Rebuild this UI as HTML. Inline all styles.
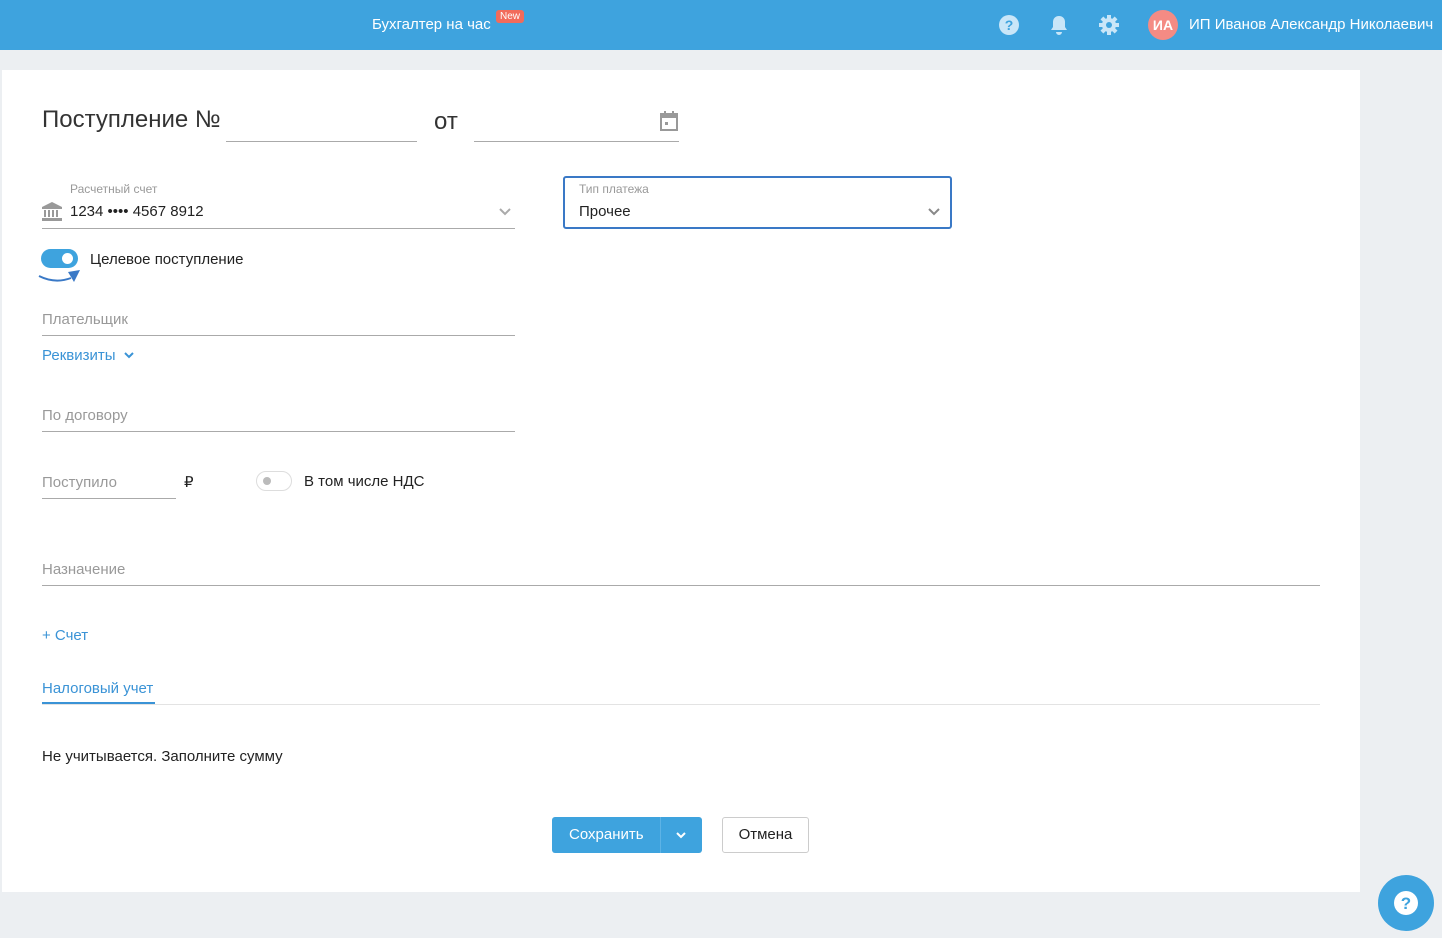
<!DOCTYPE html>
<html><head><meta charset="utf-8"><style>
*{margin:0;padding:0;box-sizing:border-box}
body{width:1442px;height:938px;background:#eceff2;font-family:"Liberation Sans",sans-serif;position:relative;overflow:hidden;color:#222}
.a{position:absolute}
.hdr{left:0;top:0;width:1442px;height:50px;background:#3ea3de}
.card{left:2px;top:70px;width:1358px;height:822px;background:#fff}
.line{height:1px;background:#aaa}
.ph{color:#999;font-size:15px}
.lbl{color:#999;font-size:12px}
.blue{color:#3a93d6}
</style></head><body>
<div class="a hdr"></div>
<div class="a" style="left:372px;top:16px;color:#fff;font-size:15px">Бухгалтер на час</div>
<div class="a" style="left:496px;top:10px;background:#f26b5b;color:#fff;font-size:10px;padding:1px 4px;border-radius:3px">New</div>
<svg class="a" style="left:998px;top:14px" width="22" height="22" viewBox="0 0 22 22"><circle cx="11" cy="11" r="10" fill="#c9e6f8"/><text x="11" y="16" font-size="14" font-weight="bold" fill="#3ea3de" text-anchor="middle" font-family="Liberation Sans">?</text></svg>
<svg class="a" style="left:1050px;top:14px" width="18" height="22" viewBox="0 0 18 22"><path d="M9 2c-4 0-6 3-6 6v5l-2 3h16l-2-3V8c0-3-2-6-6-6z M6 18a3 3 0 0 0 6 0z" fill="#c9e6f8"/></svg>
<svg class="a" style="left:1098px;top:14px" width="22" height="22" viewBox="0 0 22 22"><g fill="#c9e6f8"><circle cx="11" cy="11" r="7"/><rect x="9" y="1" width="4" height="20"/><rect x="1" y="9" width="20" height="4"/><rect x="9" y="1" width="4" height="20" transform="rotate(45 11 11)"/><rect x="9" y="1" width="4" height="20" transform="rotate(-45 11 11)"/></g><circle cx="11" cy="11" r="3" fill="#3ea3de"/></svg>
<div class="a" style="left:1148px;top:10px;width:30px;height:30px;border-radius:50%;background:#f48b84;color:#fff;font-weight:bold;font-size:14px;text-align:center;line-height:30px">ИА</div>
<div class="a" style="left:1189px;top:16px;color:#fff;font-size:15px">ИП Иванов Александр Николаевич</div>

<div class="a card"></div>
<div class="a" style="left:42px;top:106px;font-size:24px;color:#333">Поступление №</div>
<div class="a line" style="left:226px;top:141px;width:191px"></div>
<div class="a" style="left:434px;top:108px;font-size:24px;color:#333">от</div>
<div class="a line" style="left:474px;top:141px;width:205px"></div>
<svg class="a" style="left:660px;top:111px" width="18" height="20" viewBox="0 0 18 20"><rect x="1" y="3" width="16" height="16" fill="none" stroke="#999" stroke-width="2"/><rect x="1" y="3" width="16" height="4" fill="#999"/><rect x="4" y="0" width="2" height="4" fill="#999"/><rect x="12" y="0" width="2" height="4" fill="#999"/><rect x="5" y="11" width="3" height="3" fill="#999"/></svg>

<div class="a lbl" style="left:70px;top:182px">Расчетный счет</div>
<svg class="a" style="left:42px;top:202px" width="20" height="19" viewBox="0 0 20 19"><path d="M10 0L0 5h20z" fill="#999"/><rect x="0" y="5" width="20" height="2" fill="#999"/><rect x="2" y="8" width="2" height="7" fill="#999"/><rect x="6" y="8" width="2" height="7" fill="#999"/><rect x="10" y="8" width="2" height="7" fill="#999"/><rect x="14" y="8" width="2" height="7" fill="#999"/><rect x="0" y="16" width="20" height="3" fill="#999"/></svg>
<div class="a" style="left:70px;top:203px;font-size:15px">1234 •••• 4567 8912</div>
<svg class="a" style="left:499px;top:208px" width="12" height="8" viewBox="0 0 12 8"><path d="M1 1l5 5 5-5" fill="none" stroke="#aaa" stroke-width="2"/></svg>
<div class="a line" style="left:42px;top:228px;width:473px"></div>

<div class="a" style="left:563px;top:176px;width:389px;height:53px;border:2px solid #3a79c6;border-radius:3px"></div>
<div class="a lbl" style="left:579px;top:182px">Тип платежа</div>
<div class="a" style="left:579px;top:203px;font-size:15px">Прочее</div>
<svg class="a" style="left:928px;top:208px" width="12" height="8" viewBox="0 0 12 8"><path d="M1 1l5 5 5-5" fill="none" stroke="#888" stroke-width="2"/></svg>

<div class="a" style="left:41px;top:249px;width:37px;height:19px;border-radius:10px;background:#3ea3de"></div>
<div class="a" style="left:62px;top:253px;width:11px;height:11px;border-radius:50%;background:#fff"></div>
<svg class="a" style="left:38px;top:268px" width="44" height="18" viewBox="0 0 44 18"><path d="M1 8q16 8 32 2" fill="none" stroke="#3a79c6" stroke-width="2"/><path d="M30 4l12-2-6 12z" fill="#3a79c6"/></svg>
<div class="a" style="left:90px;top:251px;font-size:15px">Целевое поступление</div>

<div class="a ph" style="left:42px;top:311px">Плательщик</div>
<div class="a line" style="left:42px;top:335px;width:473px"></div>
<div class="a blue" style="left:42px;top:347px;font-size:15px">Реквизиты</div>
<svg class="a" style="left:124px;top:352px" width="10" height="7" viewBox="0 0 10 7"><path d="M1 1l4 4 4-4" fill="none" stroke="#3a93d6" stroke-width="2"/></svg>

<div class="a ph" style="left:42px;top:407px">По договору</div>
<div class="a line" style="left:42px;top:431px;width:473px"></div>

<div class="a ph" style="left:42px;top:474px">Поступило</div>
<div class="a line" style="left:42px;top:498px;width:134px"></div>
<div class="a" style="left:184px;top:473px;font-size:15px">₽</div>
<div class="a" style="left:256px;top:471px;width:36px;height:20px;border-radius:10px;border:1px solid #ddd;background:#fff"></div>
<div class="a" style="left:263px;top:477px;width:8px;height:8px;border-radius:50%;background:#bbb"></div>
<div class="a" style="left:304px;top:473px;font-size:15px">В том числе НДС</div>

<div class="a ph" style="left:42px;top:561px">Назначение</div>
<div class="a line" style="left:42px;top:585px;width:1278px"></div>

<div class="a blue" style="left:42px;top:627px;font-size:15px">+ Счет</div>
<div class="a blue" style="left:42px;top:680px;font-size:15px">Налоговый учет</div>
<div class="a" style="left:42px;top:704px;width:1278px;height:1px;background:#e3e3e3"></div>
<div class="a" style="left:42px;top:702px;width:113px;height:2px;background:#3a93d6"></div>

<div class="a" style="left:42px;top:748px;font-size:15px">Не учитывается. Заполните сумму</div>

<div class="a" style="left:552px;top:817px;width:150px;height:36px;background:#3ea3de;border-radius:3px"></div>
<div class="a" style="left:660px;top:817px;width:1px;height:36px;background:#5db3e6"></div>
<div class="a" style="left:569px;top:826px;color:#fff;font-size:15px">Сохранить</div>
<svg class="a" style="left:676px;top:832px" width="10" height="7" viewBox="0 0 10 7"><path d="M1 1l4 4 4-4" fill="none" stroke="#fff" stroke-width="2"/></svg>
<div class="a" style="left:722px;top:817px;width:87px;height:36px;border:1px solid #ccc;border-radius:3px;font-size:15px;text-align:center;line-height:34px">Отмена</div>

<div class="a" style="left:1378px;top:875px;width:56px;height:56px;border-radius:50%;background:#3ea3de"></div>
<svg class="a" style="left:1394px;top:891px" width="24" height="24" viewBox="0 0 24 24"><circle cx="12" cy="12" r="12" fill="#fff"/><text x="12" y="18" font-size="17" font-weight="bold" fill="#3ea3de" text-anchor="middle" font-family="Liberation Sans">?</text></svg>
</body></html>
